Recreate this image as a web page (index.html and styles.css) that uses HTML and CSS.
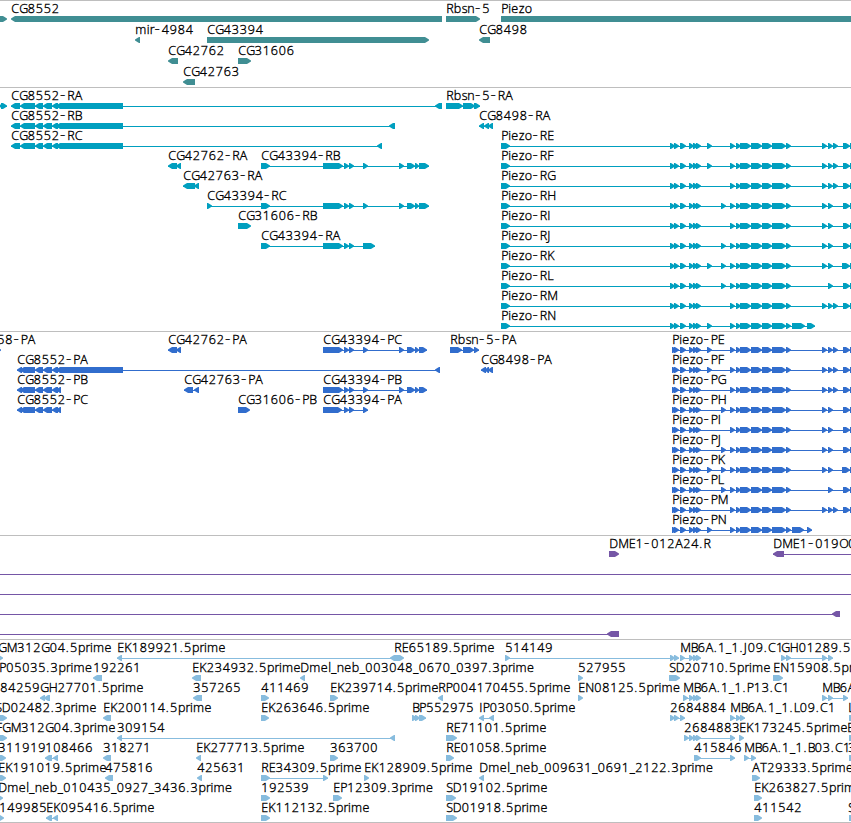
FILE: index.html
```html
<!DOCTYPE html>
<html lang="en">
<head>
    <meta charset="UTF-8">
    <title>Genome Browser</title>
    <link rel="stylesheet" href="styles.css">
</head>
<body>
    <div class="browser">
        <div class="track genes" id="genes"></div>
        <div class="track transcripts" id="transcripts"></div>
        <div class="track proteins" id="proteins"></div>
        <div class="track bacs" id="bacs"></div>
        <div class="track ests" id="ests"></div>
    </div>
    <script src="tracks.js"></script>
</body>
</html>
```
FILE: styles.css
```css
body {
    margin: 0;
    background-color: #fff;
    overflow: hidden;
}
.browser {
    display: flex;
    flex-direction: column;
    width: 851px;
    height: 823px;
    overflow: hidden;
}
.track {
    display: flex;
    flex-direction: column;
    flex-shrink: 0;
    border-top: 1px solid #bebebe;
    padding-bottom: 3px;
}
.row {
    display: block;
    width: 851px;
    height: 20px;
    overflow: visible;
}
.row text {
    font-family: "Open Sans", "Noto Sans", sans-serif;
    font-size: 12.5px;
    font-weight: 300;
    fill: #000;
    stroke: #000;
    stroke-width: 0.35px;
}
.row .dash {
    font-size: 18px;
    stroke-width: 0;
}
.genes {
    color: #408e93;
    padding-bottom: 2px;
}
.genes .row {
    height: 21px;
}
.transcripts {
    color: #009fbf;
}
.proteins {
    color: #316dcd;
}
.bacs {
    color: #7556a6;
}
.ests {
    color: #87bcde;
    padding-bottom: 2px;
    border-bottom: 1px solid #bebebe;
}
.row polygon,
.row rect {
    fill: currentColor;
}
```
FILE: tracks.js
```js
const SVG = 'http://www.w3.org/2000/svg';

// feature: [label, direction, [start, end, start, end, ...], label x (optional)]
const genes = [
    [['', '>', [-9, 7]], ['CG8552', '<', [11, 442]], ['Rbsn-5', '>', [446, 480]], ['Piezo', '>', [501, 860]]],
    [['mir-4984', '<', [135, 140]], ['CG43394', '>', [207, 429]], ['CG8498', '<', [479, 490]]],
    [['CG42762', '<', [168, 178]], ['CG31606', '>', [238, 251]]],
    [['CG42763', '<', [183, 195]]]
];

const tail8552 = [20, 35, 35, 43, 43, 52, 52, 58];
const exons43394 = [323, 343, 344, 349, 349, 354, 363, 368, 399, 404, 407, 415, 415, 419];

// Piezo isoforms differ only in a few exons
const isoforms = {
    E: [[707], [822, 828, 833]],
    F: [[707], [822, 828, 833]],
    G: [[], [822, 828, 833]],
    H: [[721], [822, 828]],
    I: [[], [822, 828]],
    J: [[721], [822, 828]],
    K: [[707, 721], [822, 828]],
    L: [[721], [828]],
    M: [[], [822, 828, 833]],
    N: [[707], []]
};

function small(starts) {
    return starts.flatMap(s => [s, s + 5]);
}

function piezo(name, type) {
    const [left, right] = isoforms[name];
    let parts = type === 'R' ? [501, 510, 670, 675] : [672, 677];
    parts = parts.concat([674, 679, 680, 686], small([689, 693, 696]), small(left),
        [730, 735, 736, 741, 740, 751, 751, 762, 762, 772, 772, 786, 786, 791]);
    if (name === 'N') {
        parts = parts.concat(type === 'R' ? [792, 805, 807, 815] : [792, 804, 807, 812]);
    } else {
        parts = parts.concat(small(right), [name === 'K' ? 842 : 843, 850, 850, 857]);
    }
    return ['Piezo-' + type + name, '>', parts];
}

const transcripts = [
    [['', '>', [-5, 2, 1, 7]], ['CG8552-RA', '<', [11, 20, ...tail8552, 56, 123, 435, 442]], ['Rbsn-5-RA', '>', [446, 463, 463, 475, 474, 480]]],
    [['CG8552-RB', '<', [11, 20, ...tail8552, 56, 123, 389, 395]], ['CG8498-RA', '<', [479, 484, 484, 489, 488, 493]]],
    [['CG8552-RC', '<', [11, 20, ...tail8552, 56, 123, 377, 382]], piezo('E', 'R')],
    [['CG42762-RA', '<', [168, 177, 176, 181]], ['CG43394-RB', '>', [261, 270, ...exons43394, 419, 429]], piezo('F', 'R')],
    [['CG42763-RA', '<', [183, 195, 194, 199]], piezo('G', 'R')],
    [['CG43394-RC', '>', [207, 212, 261, 270, ...exons43394, 419, 429]], piezo('H', 'R')],
    [['CG31606-RB', '>', [238, 251]], piezo('I', 'R')],
    [['CG43394-RA', '>', [261, 270, 323, 343, 344, 349, 349, 354, 363, 375]], piezo('J', 'R')],
    [piezo('K', 'R')],
    [piezo('L', 'R')],
    [piezo('M', 'R')],
    [piezo('N', 'R')]
];

const proteins = [
    [['58-PA', '>', [-4, 1], -3], ['CG42762-PA', '<', [168, 177, 176, 181]], ['CG43394-PC', '>', [...exons43394, 419, 427]], ['Rbsn-5-PA', '>', [450, 462, 463, 474, 474, 479]], piezo('E', 'P')],
    [['CG8552-PA', '<', [17, 22, ...tail8552, 56, 123, 435, 440]], ['CG8498-PA', '<', [481, 486, 485, 489, 488, 493]], piezo('F', 'P')],
    [['CG8552-PB', '<', [17, 22, ...tail8552, 56, 61]], ['CG42763-PA', '<', [184, 193, 194, 199]], ['CG43394-PB', '>', [...exons43394, 419, 427]], piezo('G', 'P')],
    [['CG8552-PC', '<', [17, 22, ...tail8552, 56, 61]], ['CG31606-PB', '>', [238, 250]], ['CG43394-PA', '>', [323, 342, 344, 349, 349, 354, 363, 368]], piezo('H', 'P')],
    [piezo('I', 'P')],
    [piezo('J', 'P')],
    [piezo('K', 'P')],
    [piezo('L', 'P')],
    [piezo('M', 'P')],
    [piezo('N', 'P')]
];

const bacs = [
    [['DME1-012A24.R', '>', [609, 619]], ['DME1-019O0', '<', [773, 784, 860, 870]]],
    [['', '<', [-20, -10, 860, 870]]],
    [['', '<', [-20, -10, 860, 870]]],
    [['', '<', [-20, -10, 832, 839, 839, 840]]],
    [['', '<', [-20, -10, 607, 619]]]
];

const ests = [
    [['GM312G04.5prime', '>', [-4, 3], -2], ['EK189921.5prime', '<', [117, 122, 390, 399]], ['RE65189.5prime', '>', [394, 404]], ['514149', '>', [505, 510, 670, 675, 674, 679]], ['MB6A.1_1.J09.C1', '>', [680, 685, 689, 694, 693, 698, 696, 701]], ['GH01289.5prime', '>', [781, 786, 786, 791, 822, 827, 828, 833]]],
    [['P05035.3prime', '>', [-6, 0], -1], ['192261', '<', [93, 102]], ['EK234932.5prime', '<', [192, 201]], ['Dmel_neb_003048_0670_0397.3prime', '<', [300, 305]], ['527955', '>', [578, 583]], ['SD20710.5prime', '>', [669, 680]], ['EN15908.5prime', '>', [773, 783]]],
    [['84259', '>', [-6, 0], 0], ['GH27701.5prime', '<', [40, 45, 44, 50]], ['357265', '<', [193, 202]], ['411469', '>', [261, 269]], ['EK239714.5prime', '>', [330, 338]], ['RP004170455.5prime', '<', [438, 443]], ['EN08125.5prime', '>', [578, 583]], ['MB6A.1_1.P13.C1', '>', [683, 688, 689, 694, 693, 698, 696, 701]], ['MB6A.1_1', '>', [822, 827, 828, 833, 843, 848]]],
    [['SD02482.3prime', '>', [-4, 7], -5], ['EK200114.5prime', '<', [103, 111]], ['EK263646.5prime', '>', [261, 269]], ['BP552975', '>', [412, 417, 415, 420, 419, 426]], ['IP03050.5prime', '<', [479, 484, 489, 494]], ['2684884', '>', [670, 675, 674, 679, 680, 685]], ['MB6A.1_1.L09.C1', '>', [730, 735, 736, 741, 740, 745]], ['L', '>', [849, 856], 848]],
    [['FGM312G04.3prime', '>', [-4, 7], -4.5], ['309154', '<', [117, 122, 390, 395]], ['RE71101.5prime', '>', [446, 457]], ['2684883', '>', [684, 689, 689, 694, 693, 698, 696, 701, 730, 735]], ['EK173245.5prime', '>', [739, 744]], ['E', '>', [849, 856], 847]],
    [['311919', '>', [-4, 6], -2], ['108466', '<', [45, 52, 53, 58]], ['318271', '<', [103, 111]], ['EK277713.5prime', '<', [196, 201]], ['363700', '>', [330, 338]], ['RE01058.5prime', '>', [446, 454]], ['415846', '>', [694, 701, 730, 735]], ['MB6A.1_1.B03.C1', '>', [744, 749, 751, 756]], ['3', '>', [849, 856], 848]],
    [['EK191019.5prime', '>', [-4, 6], -2], ['475816', '<', [105, 113]], ['425631', '<', [197, 202]], ['RE34309.5prime', '>', [261, 270, 323, 328]], ['EK128909.5prime', '>', [364, 369]], ['Dmel_neb_009631_0691_2122.3prime', '<', [479, 484]], ['AT29333.5prime', '>', [752, 760]]],
    [['Dmel_neb_010435_0927_3436.3prime', '>', [-4, 3], -2], ['192539', '>', [261, 270]], ['EP12309.3prime', '>', [333, 342]], ['SD19102.5prime', '>', [446, 456]], ['EK263827.5prime', '>', [754, 762]]],
    [['149985', '>', [-4, 4], -1], ['EK095416.5prime', '<', [46, 52, 53, 58]], ['EK112132.5prime', '>', [261, 270]], ['SD01918.5prime', '>', [446, 457]], ['411542', '>', [754, 762]], ['S', '>', [849, 856], 848]]
];

// label advance widths in px, digits are 8
const advance = {
    '-': 7.5, '.': 4.3, '_': 5.5, A: 8, B: 7, C: 8, D: 9, E: 7, F: 6.5, G: 8.5, H: 9, I: 3.5, J: 4, K: 7.5,
    L: 6, M: 10.5, N: 9, O: 9, P: 7, R: 7.5, S: 6.5, T: 7, b: 8, e: 7.5, i: 3, l: 3, m: 11.5, n: 7.5,
    o: 7.5, p: 7.5, r: 4.5, s: 5.5, z: 6
};

function add(parent, tag, attrs) {
    const el = document.createElementNS(SVG, tag);
    for (const key in attrs) {
        el.setAttribute(key, attrs[key]);
    }
    parent.appendChild(el);
    return el;
}

function drawPart(row, dir, a, b) {
    const head = Math.min(5, b - a);
    const points = dir === '>'
        ? [[a, 15], [b - head + 1, 15], [b, 17.5], [b, 18.5], [b - head + 1, 21], [a, 21]]
        : [[b, 15], [a + head - 1, 15], [a, 17.5], [a, 18.5], [a + head - 1, 21], [b, 21]];
    add(row, 'polygon', { points: points.join(' ') });
}

function drawFeature(row, [label, dir, parts, labelX]) {
    const start = parts[0];
    const end = parts[parts.length - 1];
    if (parts.length > 2) {
        add(row, 'rect', { x: start, y: 18, width: end - start, height: 1 });
    }
    for (let i = 0; i < parts.length; i += 2) {
        drawPart(row, dir, parts[i], parts[i + 1]);
    }
    if (label) {
        // every glyph gets its own x so labels keep the fixed advances
        let x = labelX === undefined ? start : labelX;
        const text = add(row, 'text', { y: 12 });
        for (const part of label.split(/(-)/)) {
            const xs = [];
            for (const c of part) {
                xs.push(x + 0.2);
                x += advance[c] || 8;
            }
            const span = add(text, 'tspan', { x: xs.join(' '), y: part === '-' ? 13 : 12 });
            span.textContent = part;
            if (part === '-') {
                span.setAttribute('class', 'dash');
            }
        }
    }
}

function drawTrack(id, rows) {
    const track = document.getElementById(id);
    rows.forEach(features => {
        const row = add(track, 'svg', { class: 'row' });
        features.forEach(f => drawFeature(row, f));
    });
}

drawTrack('genes', genes);
drawTrack('transcripts', transcripts);
drawTrack('proteins', proteins);
drawTrack('bacs', bacs);
drawTrack('ests', ests);
```
